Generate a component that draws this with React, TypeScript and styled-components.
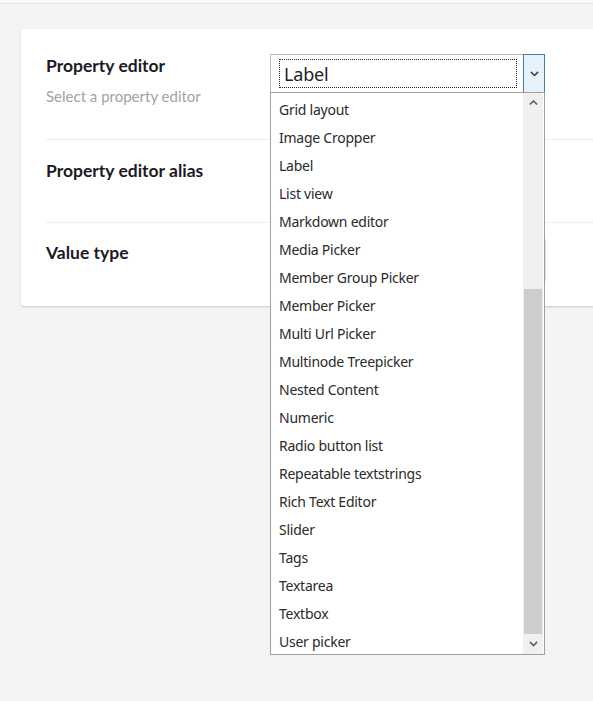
import styled, { createGlobalStyle } from 'styled-components';

const GlobalStyle = createGlobalStyle`
  html, body {
    margin: 0;
    padding: 0;
    background: #f5f3f4;
    overflow: hidden;
  }
  * {
    box-sizing: border-box;
  }
`;

const Page = styled.div`
  width: 593px;
  height: 701px;
  font-family: Lato, "Open Sans", sans-serif;
`;

const TopStrip = styled.div`
  height: 4px;
  background: #f9f9f9;
  border-bottom: 1px solid #e8e8e8;
`;

const Card = styled.div`
  margin: 25px -20px 0 21px;
  background: #ffffff;
  border-radius: 3px;
  box-shadow: 0 1px 2px rgba(0, 0, 0, 0.18);
  padding-left: 25px;
`;

const Row = styled.div<{ $pad: string; $last?: boolean }>`
  display: flex;
  padding: ${(p) => p.$pad};
  border-bottom: ${(p) => (p.$last ? 'none' : '1px solid #eeeeee')};
`;

const LabelCol = styled.div`
  width: 224px;
  flex-shrink: 0;
`;

const Label = styled.div`
  font-size: 17.5px;
  font-weight: 700;
  line-height: 24px;
  color: #1b1b1f;
`;

const Description = styled.div`
  margin-top: 8px;
  font-size: 15px;
  line-height: 20px;
  color: #a2a1a6;
`;

const Control = styled.div`
  position: relative;
`;

const SelectBox = styled.div`
  width: 275px;
  height: 39px;
  display: flex;
  border: 1px solid #b9b9b9;
  background: #fff;
  font-family: "Noto Sans", "Open Sans", sans-serif;
`;

const FocusArea = styled.div`
  flex: 1;
  display: flex;
  padding: 4px 6px 4px 8px;
`;

const FocusRing = styled.div`
  flex: 1;
  border: 1px dotted #222;
  display: flex;
  align-items: center;
  padding-left: 4px;
  font-size: 18px;
  color: #222;
  letter-spacing: -0.2px;
`;

const ArrowButton = styled.div`
  width: 22px;
  margin: -1px -1px -1px 0;
  background: #e5f1fb;
  border: 1px solid #3c7fb1;
  display: flex;
  align-items: center;
  justify-content: center;
`;

const PlainBox = styled.div`
  width: 276px;
  height: 44px;
  margin-top: -3px;
  border: 1px solid #dcdcdc;
  border-radius: 2px;
  background: #fff;
`;

const Dropdown = styled.div`
  position: absolute;
  left: 0;
  top: 38px;
  width: 275px;
  height: 563px;
  display: flex;
  overflow: hidden;
  background: #fff;
  border: 1px solid #a0a0a0;
  z-index: 10;
  font-family: "Noto Sans", "Open Sans", sans-serif;
`;

const Options = styled.div`
  flex: 1;
  padding-top: 3px;
`;

const Option = styled.div`
  height: 28px;
  line-height: 28px;
  padding-left: 8px;
  font-size: 14px;
  letter-spacing: -0.25px;
  color: #2a2a2a;
  white-space: nowrap;
`;

const Scrollbar = styled.div`
  width: 20px;
  margin-right: 1px;
  background: #f0f0f0;
  display: flex;
  flex-direction: column;
`;

const ScrollButton = styled.div`
  height: 20px;
  flex-shrink: 0;
  display: flex;
  align-items: center;
  justify-content: center;
`;

const Track = styled.div`
  flex: 1;
  display: flex;
  flex-direction: column;
  justify-content: flex-end;
`;

const Thumb = styled.div`
  height: 345px;
  margin: 0 1px;
  background: #cdcdcd;
`;

const Chevron = ({ up, color = '#606060', w = 8 }: { up?: boolean; color?: string; w?: number }) => (
  <svg width={w} height={w * 0.6} viewBox="0 0 10 6" fill="none">
    <path d={up ? 'M1 5 L5 1 L9 5' : 'M1 1 L5 5 L9 1'} stroke={color} strokeWidth={1.8} />
  </svg>
);

const editors = [
  'Grid layout',
  'Image Cropper',
  'Label',
  'List view',
  'Markdown editor',
  'Media Picker',
  'Member Group Picker',
  'Member Picker',
  'Multi Url Picker',
  'Multinode Treepicker',
  'Nested Content',
  'Numeric',
  'Radio button list',
  'Repeatable textstrings',
  'Rich Text Editor',
  'Slider',
  'Tags',
  'Textarea',
  'Textbox',
  'User picker',
];

export default function App() {
  return (
    <Page>
      <GlobalStyle />
      <TopStrip />
      <Card>
        <Row $pad="25px 0 33px">
          <LabelCol>
            <Label>Property editor</Label>
            <Description>Select a property editor</Description>
          </LabelCol>
          <Control>
            <SelectBox>
              <FocusArea>
                <FocusRing>Label</FocusRing>
              </FocusArea>
              <ArrowButton>
                <Chevron color="#444" w={9} />
              </ArrowButton>
            </SelectBox>
            <Dropdown>
              <Options>
                {editors.map((name) => (
                  <Option key={name}>{name}</Option>
                ))}
              </Options>
              <Scrollbar>
                <ScrollButton>
                  <Chevron up w={9} />
                </ScrollButton>
                <Track>
                  <Thumb />
                </Track>
                <ScrollButton>
                  <Chevron w={9} />
                </ScrollButton>
              </Scrollbar>
            </Dropdown>
          </Control>
        </Row>
        <Row $pad="19px 0 39px">
          <LabelCol>
            <Label>Property editor alias</Label>
          </LabelCol>
        </Row>
        <Row $pad="18px 0 24px" $last>
          <LabelCol>
            <Label>Value type</Label>
          </LabelCol>
          <Control>
            <PlainBox />
          </Control>
        </Row>
      </Card>
    </Page>
  );
}
